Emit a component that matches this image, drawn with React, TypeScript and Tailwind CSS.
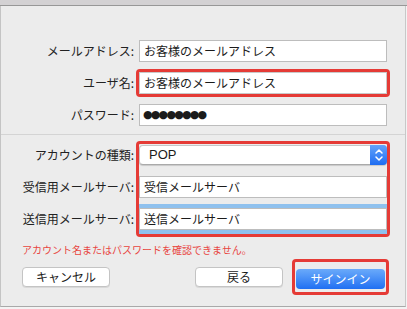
import React from 'react';

const jp = { fontFamily: '"Noto Sans CJK JP", "Noto Sans", sans-serif' };

const Field = ({ value, className = '' }: { value: string; className?: string }) => (
  <div
    className={`flex h-[22px] w-[248px] items-center border border-[#bdbdbd] bg-white pl-[4px] text-[12px] text-[#1b1b1b] ${className}`}
  >
    {value}
  </div>
);

const Label = ({ text, h }: { text: string; h: string }) => (
  <div className={`flex w-[133px] items-center justify-end text-[12px] text-[#222] ${h}`}>{text}</div>
);

const App = () => {
  return (
    <div className="h-[309px] w-[407px] overflow-hidden bg-[#f3f3f3]" style={jp}>
      {/* window top */}
      <div className="h-[6px] border-b border-[#979797] bg-[#d3d1d3]" />

      <div className="flex h-[301px] w-[406px] flex-col border-b border-l border-r border-b-[#a9a9a9] border-l-[#c4c4c4] border-r-[#c8c8c8] bg-[#ececec]">
        {/* account fields */}
        <div className="flex flex-col gap-[10px] pt-[34px]">
          <div className="flex items-center gap-[5px]">
            <Label text="メールアドレス:" h="h-[22px]" />
            <Field value="お客様のメールアドレス" />
          </div>
          <div className="flex items-center gap-[5px]">
            <Label text="ユーザ名:" h="h-[22px]" />
            <div className="-m-[3px] rounded-[4px] border-[3px] border-[#e53b36]">
              <Field value="お客様のメールアドレス" className="border-[#c9c9c9]" />
            </div>
          </div>
          <div className="flex items-center gap-[5px]">
            <Label text="パスワード:" h="h-[22px]" />
            <div className="flex h-[22px] w-[248px] items-center border border-[#bdbdbd] bg-white pl-[3px] text-[#1b1b1b]">
              <span className="text-[11px] tracking-[-1.8px]" style={{ fontFamily: '"DejaVu Sans", sans-serif' }}>
                ●●●●●●●●
              </span>
            </div>
          </div>
        </div>

        <div className="mt-[8px] border-t border-[#d4d4d4]" />

        {/* server settings */}
        <div className="mt-[6px] flex">
          <div className="flex flex-col pt-[3px]">
            <Label text="アカウントの種類:" h="mt-[1px] h-[20px]" />
            <Label text="受信用メールサーバ:" h="mt-[11px] h-[22px]" />
            <Label text="送信用メールサーバ:" h="mt-[6px] h-[29px]" />
          </div>
          <div className="ml-[2px] w-[254px] rounded-[4px] border-[3px] border-[#e53b36]">
            <div className="mt-[1px] flex h-[20px] items-stretch rounded-[4px] border border-[#c6c6c6] border-b-[#aaaaaa] bg-white shadow-[0_1px_1px_rgba(0,0,0,0.15)]">
              <div
                className="flex flex-1 items-center pl-[9px] text-[13px] text-[#1b1b1b]"
                style={{ fontFamily: '"Liberation Sans", Arial, sans-serif' }}
              >
                POP
              </div>
              <div className="-my-[1px] -mr-[1px] flex w-[17px] items-center justify-center rounded-r-[4px] bg-gradient-to-b from-[#62a2fa] to-[#1d6cf1]">
                <svg width="10" height="14" viewBox="0 0 10 14" fill="none">
                  <path d="M2 5 L5 2 L8 5" stroke="white" strokeWidth="1.5" strokeLinecap="round" strokeLinejoin="round" />
                  <path d="M2 9 L5 12 L8 9" stroke="white" strokeWidth="1.5" strokeLinecap="round" strokeLinejoin="round" />
                </svg>
              </div>
            </div>
            <Field value="受信メールサーバ" className="mt-[11px]" />
            <div className="mt-[6px] bg-[#8fc1ee] py-[4px]">
              <Field value="送信メールサーバ" className="h-[21px] border-[#7d9fc4]" />
            </div>
          </div>
        </div>

        <div className="mt-[6px] pl-[21px] text-[10px] leading-[14px] text-[#e8453f]">
          アカウント名またはパスワードを確認できません。
        </div>

        {/* buttons */}
        <div className="mt-[2px] flex items-center pl-[21px]">
          <button className="h-[20px] w-[88px] rounded-[4px] border border-[#c4c4c4] bg-white text-[12px] text-[#1b1b1b] shadow-[0_1px_0_rgba(0,0,0,0.08)]">
            キャンセル
          </button>
          <button className="ml-[85px] h-[20px] w-[88px] rounded-[4px] border border-[#c4c4c4] bg-white text-[12px] text-[#1b1b1b] shadow-[0_1px_0_rgba(0,0,0,0.08)]">
            戻る
          </button>
          <div className="ml-[9px] rounded-[4px] border-[3px] border-[#e53b36] px-[1px] py-[3px]">
            <button className="h-[20px] w-[89px] rounded-[4px] bg-gradient-to-b from-[#6aaafa] to-[#1f6ff2] text-[12px] text-white">
              サインイン
            </button>
          </div>
        </div>
      </div>
    </div>
  );
};

export default App;
